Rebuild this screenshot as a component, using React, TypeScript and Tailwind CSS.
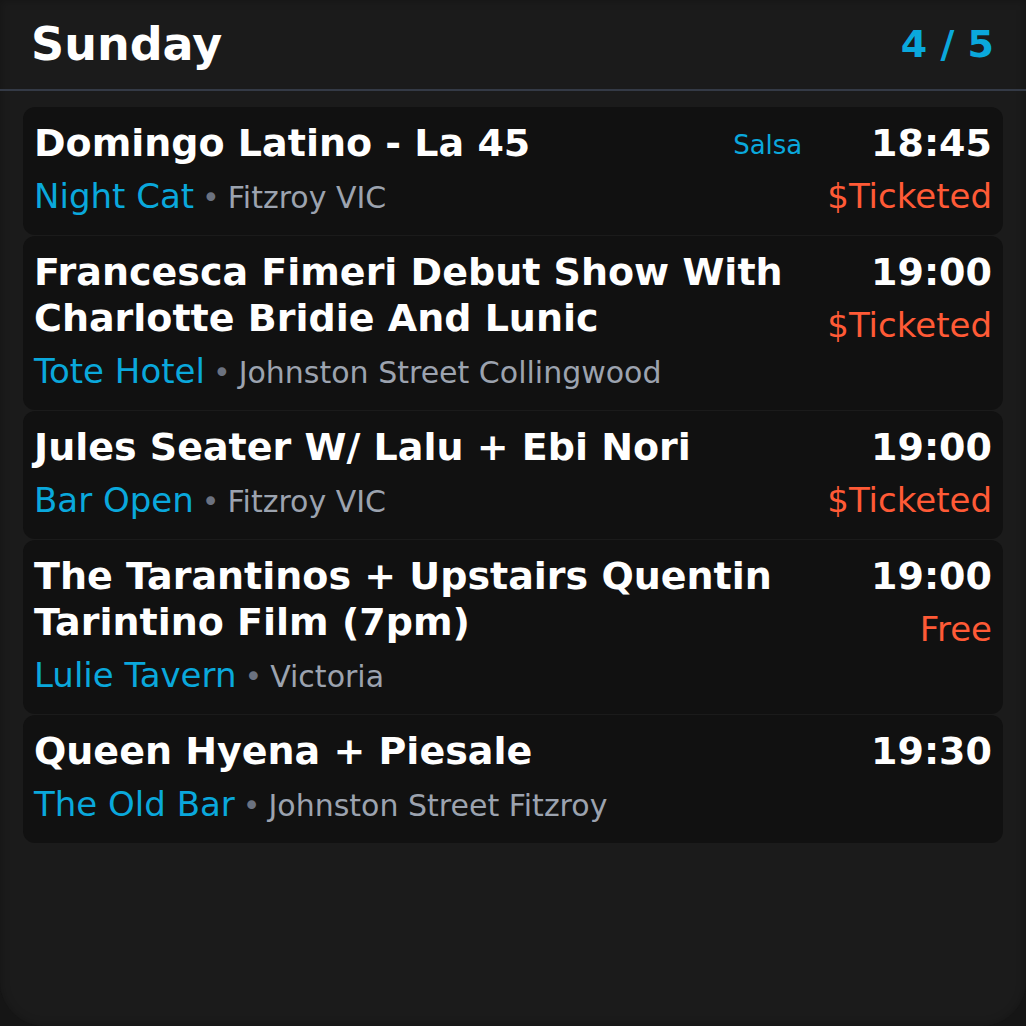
import React from "react";

type Gig = {
  title: string;
  venue: string;
  place: string;
  time: string;
  price?: string;
  genre?: string;
};

const gigs: Gig[] = [
  { title: "Domingo Latino - La 45", venue: "Night Cat", place: "Fitzroy VIC", time: "18:45", price: "$Ticketed", genre: "Salsa" },
  { title: "Francesca Fimeri Debut Show With Charlotte Bridie And Lunic", venue: "Tote Hotel", place: "Johnston Street Collingwood", time: "19:00", price: "$Ticketed" },
  { title: "Jules Seater W/ Lalu + Ebi Nori", venue: "Bar Open", place: "Fitzroy VIC", time: "19:00", price: "$Ticketed" },
  { title: "The Tarantinos + Upstairs Quentin Tarintino Film (7pm)", venue: "Lulie Tavern", place: "Victoria", time: "19:00", price: "Free" },
  { title: "Queen Hyena + Piesale", venue: "The Old Bar", place: "Johnston Street Fitzroy", time: "19:30" },
];

function GigCard({ gig }: { gig: Gig }) {
  return (
    <div className="flex rounded-xl bg-[#111111] px-[11px] pt-[13px] pb-4">
      <div className="flex-1 min-w-0">
        <div className="text-[38px] leading-[46px] font-bold text-white">{gig.title}</div>
        <div className="mt-[7px] text-[34px] leading-[46px] text-[#0aa8dc]">
          {gig.venue}
          <span className="mx-2 text-[30px] leading-none text-[#6b7280]">•</span>
          <span className="text-[30px] leading-none text-[#9ca3af]">{gig.place}</span>
        </div>
      </div>
      {gig.genre && (
        <div className="ml-4 pt-[2px] text-[26px] leading-[46px] text-[#0aa8dc]">{gig.genre}</div>
      )}
      <div className="flex flex-col items-end pl-[25px]">
        <div className="text-[38px] leading-[46px] font-bold text-white">{gig.time}</div>
        {gig.price && (
          <div className="mt-[7px] text-[34px] leading-[46px] text-[#ff5a36]">{gig.price}</div>
        )}
      </div>
    </div>
  );
}

export default function App() {
  return (
    <div className="w-[1026px] h-[1026px] bg-[#151515] font-['DejaVu_Sans',sans-serif]">
      <div className="h-full rounded-b-[44px] bg-[#1b1b1b] shadow-[inset_0_0_10px_rgba(0,0,0,0.25)]">
        <div className="flex h-[91px] items-center justify-between border-b-2 border-[#343a46] pl-[31px] pr-[32px]">
          <h1 className="text-[46px] font-bold text-white">Sunday</h1>
          <span className="text-[38px] font-bold text-[#0aa8dc]">4 / 5</span>
        </div>
        <div className="flex flex-col gap-px px-[23px] pt-4">
          {gigs.map((g) => (
            <GigCard key={g.title} gig={g} />
          ))}
        </div>
      </div>
    </div>
  );
}
